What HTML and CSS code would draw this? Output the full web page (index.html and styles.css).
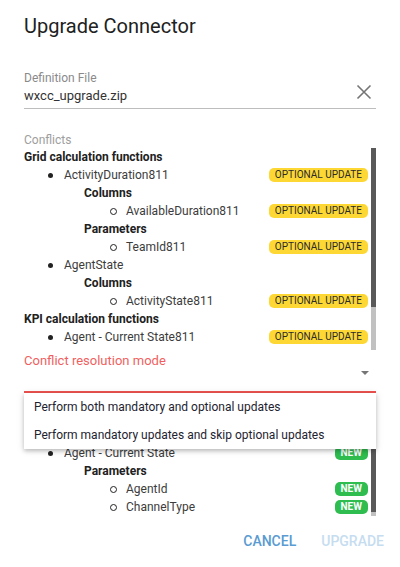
FILE: index.html
```html
<!DOCTYPE html>
<html>
<head>
<meta charset="utf-8">
<link rel="stylesheet" href="styles.css">
</head>
<body>
<div class="dialog">
  <h1 class="title">Upgrade Connector</h1>

  <div class="field file-field">
    <div class="field-main">
      <div class="field-label">Definition File</div>
      <div class="field-value">wxcc_upgrade.zip</div>
    </div>
    <svg class="close-icon" viewBox="0 0 24 24" width="24" height="24">
      <path d="M5.5 5.5 L18.5 18.5 M18.5 5.5 L5.5 18.5" stroke="#757575" stroke-width="1.6" fill="none"/>
    </svg>
  </div>

  <div class="section-label">Conflicts</div>
  <div class="scroll scroll-conflicts">
    <div class="scroll-content">
      <div class="row lvl0">Grid calculation functions</div>
      <div class="row lvl1"><span class="name">ActivityDuration811</span><span class="badge opt">OPTIONAL UPDATE</span></div>
      <div class="row lvl2">Columns</div>
      <div class="row lvl3"><span class="name">AvailableDuration811</span><span class="badge opt">OPTIONAL UPDATE</span></div>
      <div class="row lvl2">Parameters</div>
      <div class="row lvl3"><span class="name">TeamId811</span><span class="badge opt">OPTIONAL UPDATE</span></div>
      <div class="row lvl1"><span class="name">AgentState</span></div>
      <div class="row lvl2">Columns</div>
      <div class="row lvl3"><span class="name">ActivityState811</span><span class="badge opt">OPTIONAL UPDATE</span></div>
      <div class="row lvl0">KPI calculation functions</div>
      <div class="row lvl1"><span class="name">Agent - Current State811</span><span class="badge opt">OPTIONAL UPDATE</span></div>
      <div class="row lvl2">Parameters</div>
      <div class="row lvl3"><span class="name">ChannelType811</span><span class="badge opt">OPTIONAL UPDATE</span></div>
    </div>
    <div class="scrollbar"><div class="thumb thumb-conflicts"></div></div>
  </div>

  <div class="select-label">Conflict resolution mode</div>
  <div class="select">
    <svg class="arrow" viewBox="0 0 8 4" width="8" height="4"><path d="M0 0 L8 0 L4 4 Z" fill="#757575"/></svg>
    <div class="menu">
      <div class="menu-item">Perform both mandatory and optional updates</div>
      <div class="menu-item">Perform mandatory updates and skip optional updates</div>
    </div>
  </div>

  <div class="section-label second-label">New items</div>
  <div class="scroll scroll-new">
    <div class="scroll-content">
      <div class="row lvl0">KPI calculation functions</div>
      <div class="row lvl1"><span class="name">Agent - Current State</span><span class="badge new">NEW</span></div>
      <div class="row lvl2">Parameters</div>
      <div class="row lvl3"><span class="name">AgentId</span><span class="badge new">NEW</span></div>
      <div class="row lvl3"><span class="name">ChannelType</span><span class="badge new">NEW</span></div>
    </div>
    <div class="scrollbar"><div class="thumb thumb-new"></div></div>
  </div>

  <div class="actions">
    <button class="btn btn-cancel">CANCEL</button>
    <button class="btn btn-upgrade" disabled>UPGRADE</button>
  </div>
</div>
</body>
</html>
```

FILE: styles.css
```css
* { box-sizing: border-box; }
html, body {
  margin: 0;
  padding: 0;
  background: #ffffff;
  font-family: Roboto, "Liberation Sans", Arial, sans-serif;
}
.dialog {
  width: 400px;
  height: 567px;
  padding: 0 24px;
  overflow: hidden;
}
.title {
  margin: 10px 0 0 0;
  font-size: 20px;
  line-height: 32px;
  font-weight: 400;
  color: #212121;
}
.field {
  display: flex;
  align-items: center;
  margin-top: 28px;
  border-bottom: 1px solid #bdbdbd;
  padding-bottom: 2px;
}
.field-main { flex: 1; }
.field-label {
  font-size: 12px;
  line-height: 16px;
  color: #8a8a8a;
}
.field-value {
  font-size: 13px;
  line-height: 20px;
  color: #333333;
}
.close-icon {
  display: block;
  margin-top: 8px;
}
.section-label {
  margin-top: 24px;
  font-size: 12px;
  line-height: 15px;
  color: #9e9e9e;
}
.scroll {
  display: flex;
}
.scroll-conflicts { height: 202px; }
.scroll-content {
  flex: 1;
  overflow: hidden;
  padding-right: 3px;
}
.scrollbar {
  width: 5px;
  background: #c1c1c1;
}
.thumb { background: #595959; }
.thumb-conflicts { height: 159px; }
.thumb-new { height: 86px; }
.row {
  display: flex;
  align-items: center;
  height: 18px;
  font-size: 12px;
  color: #3c3c3c;
}
.row .name { flex: 1; white-space: nowrap; }
.lvl0 { font-weight: 700; color: #212121; }
.lvl2 { font-weight: 700; color: #212121; padding-left: 60px; }
.lvl1 { padding-left: 24px; }
.lvl1::before {
  content: "";
  width: 5px;
  height: 5px;
  border-radius: 50%;
  background: #222;
  margin-right: 11px;
  flex: none;
}
.lvl3 { padding-left: 86px; }
.lvl3::before {
  content: "";
  width: 5px;
  height: 5px;
  border-radius: 50%;
  border: 1px solid #222;
  margin-right: 9px;
  flex: none;
}
.badge {
  height: 14px;
  line-height: 14px;
  font-size: 10px;
  padding: 0 6px;
  border-radius: 5px;
  white-space: nowrap;
}
.badge.opt {
  background: #fdd835;
  color: #2b2b2b;
}
.badge.new {
  background: #2ebd4e;
  color: #ffffff;
  font-weight: 700;
}
.select-label {
  margin-top: 3px;
  font-size: 13px;
  line-height: 16px;
  color: #f05f5f;
}
.select {
  position: relative;
  height: 24px;
  border-bottom: 2px solid #ef5350;
  display: flex;
  justify-content: flex-end;
  align-items: flex-start;
  padding: 2px 7px 0 0;
}
.arrow { display: block; }
.menu {
  position: absolute;
  left: 0;
  right: 0;
  top: calc(100% + 2px);
  background: #ffffff;
  box-shadow: 0 2px 4px rgba(0,0,0,0.2), 0 1px 8px rgba(0,0,0,0.12);
  z-index: 10;
}
.menu-item {
  height: 28px;
  line-height: 28px;
  padding-left: 10px;
  font-size: 12px;
  color: #1e2330;
  white-space: nowrap;
}
.second-label { margin-top: 18px; }
.scroll-new { height: 90px; }
.actions {
  display: flex;
  justify-content: flex-end;
  gap: 9px;
  margin: 7px -16px 0 0;
}
.btn {
  height: 36px;
  padding: 0 8px;
  border: none;
  background: transparent;
  font-family: Roboto, "Liberation Sans", Arial, sans-serif;
  font-size: 14px;
  font-weight: 500;
}
.btn-cancel { color: #5a9bd1; }
.btn-upgrade { color: #c6ddf0; }
```
